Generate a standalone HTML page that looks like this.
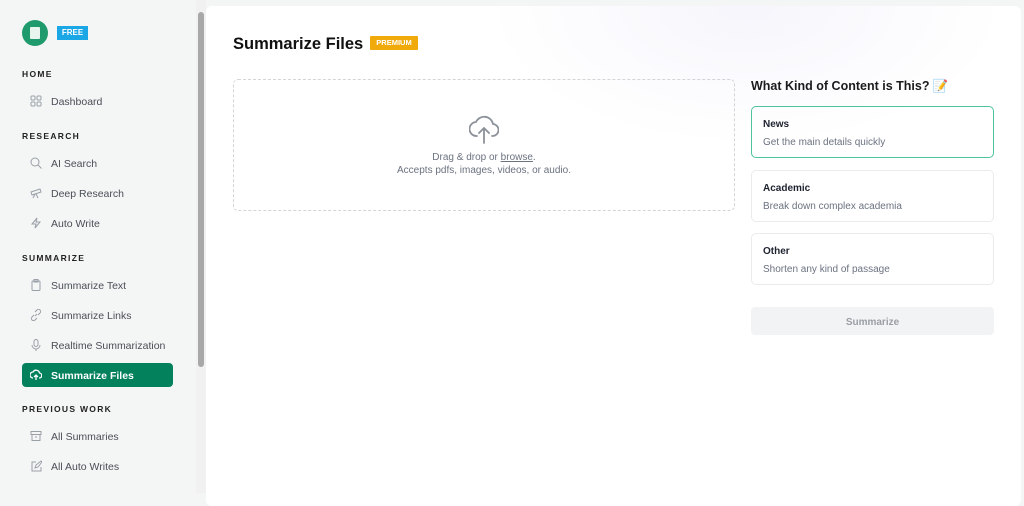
<!DOCTYPE html>
<html><head><style>
*{box-sizing:border-box;margin:0;padding:0}
body{width:1024px;height:493px;overflow:hidden;background:#f4f5f5;font-family:"Liberation Sans",sans-serif;position:relative}
.sb{position:absolute;left:0;top:0;width:196px;height:493px}
.logo{position:absolute;left:22px;top:20px;width:26px;height:26px;border-radius:50%;background:#1f9a6c}
.logo i{position:absolute;left:8px;top:7px;width:10px;height:12px;background:#e8f5ef;border-radius:1px}
.free{position:absolute;left:57px;top:26px;width:31px;height:14px;background:#1ba6e6;color:#fff;font-size:8px;font-weight:bold;text-align:center;line-height:14px}
.h{position:absolute;left:22px;font-size:8.5px;font-weight:bold;letter-spacing:1.3px;color:#222}
.it{position:absolute;left:22px;width:151px;height:24px;font-size:10.5px;color:#4a4f57;line-height:27px;padding-left:29px}
.it svg{position:absolute;left:8px;top:6px}
.act{background:#03805c;color:#fff;font-weight:bold;border-radius:4px}
.scr{position:absolute;left:196px;top:0;width:10px;height:493px;background:#f1f1f1}
.thumb{position:absolute;left:198px;top:12px;width:6px;height:355px;background:#a8a8a8;border-radius:3px}
.main{position:absolute;left:206px;top:6px;width:815px;height:500px;background:#fff;border-radius:6px;overflow:hidden}
.glow{position:absolute;left:280px;top:-140px;width:520px;height:280px;background:radial-gradient(ellipse at center,rgba(236,234,248,.45),rgba(255,255,255,0) 70%)}
.t{position:absolute;left:27px;top:29px;font-size:16.5px;font-weight:bold;color:#111}
.prem{position:absolute;left:164px;top:30px;width:48px;height:14px;background:#f0aa0c;color:#fff;font-size:7.5px;font-weight:bold;text-align:center;line-height:14px;border-radius:1px}
.drop{position:absolute;left:27px;top:73px;width:502px;height:132px;border:1px dashed #d2d4d8;border-radius:5px;text-align:center;color:#6b7280;font-size:10px}
.q{position:absolute;left:545px;top:73px;font-size:12.5px;font-weight:bold;color:#1b1b1b}
.c{position:absolute;left:545px;width:243px;height:52px;border:1px solid #ebebeb;border-radius:5px;padding:12px 11px}
.c b{display:block;font-size:10px;color:#1f2330;margin-bottom:2px}
.c span{font-size:10px;color:#6b7280}
.btn{position:absolute;left:545px;top:301px;width:243px;height:28px;background:#f2f3f4;border-radius:4px;text-align:center;line-height:31px;font-size:10px;font-weight:bold;color:#9a9ea5}
</style></head><body>
<div class="sb">
<div class="logo"><i></i></div><div class="free">FREE</div>
<div class="h" style="top:69px">HOME</div>
<div class="it" style="top:89px"><svg width="12" height="12" fill="none" stroke="#9aa0a8"><rect x="1" y="1" width="4" height="4" rx="1"/><rect x="7" y="1" width="4" height="4" rx="1"/><rect x="1" y="7" width="4" height="4" rx="1"/><rect x="7" y="7" width="4" height="4" rx="1"/></svg>Dashboard</div>
<div class="h" style="top:131px">RESEARCH</div>
<div class="it" style="top:151px"><svg width="12" height="12" fill="none" stroke="#9aa0a8"><circle cx="5" cy="5" r="4"/><path d="M8 8l3.5 3.5"/></svg>AI Search</div>
<div class="it" style="top:181px"><svg width="12" height="12" fill="none" stroke="#9aa0a8"><path d="M1 5l9-3 1 3-9 3zM5 7l-2 4M6 7l2 4"/></svg>Deep Research</div>
<div class="it" style="top:211px"><svg width="12" height="12" fill="none" stroke="#9aa0a8"><path d="M7 1L2 7h4l-1 4 5-6H6z"/></svg>Auto Write</div>
<div class="h" style="top:253px">SUMMARIZE</div>
<div class="it" style="top:273px"><svg width="12" height="12" fill="none" stroke="#9aa0a8"><rect x="2" y="2" width="8" height="9.5" rx="1"/><rect x="4" y="0.5" width="4" height="2.5"/></svg>Summarize Text</div>
<div class="it" style="top:303px"><svg width="12" height="12" fill="none" stroke="#9aa0a8"><path d="M5 7l2-2M4 6L2 8a2 2 0 003 3l2-2M8 6l2-2a2 2 0 00-3-3L5 3"/></svg>Summarize Links</div>
<div class="it" style="top:333px"><svg width="12" height="12" fill="none" stroke="#9aa0a8"><rect x="4" y="0.5" width="4" height="7" rx="2"/><path d="M2 6a4 4 0 008 0M6 10v2"/></svg>Realtime Summarization</div>
<div class="it act" style="top:363px"><svg width="12" height="12" fill="none" stroke="#fff" stroke-width="1.3"><path d="M3 9a3 3 0 01 0-6 3.5 3.5 0 016.5 1A2.5 2.5 0 019 9M6 11V6M4 8l2-2 2 2"/></svg>Summarize Files</div>
<div class="h" style="top:404px">PREVIOUS WORK</div>
<div class="it" style="top:424px"><svg width="12" height="12" fill="none" stroke="#9aa0a8"><rect x="1" y="1.5" width="10" height="3"/><path d="M2 4.5v6h8v-6M5 7h2"/></svg>All Summaries</div>
<div class="it" style="top:454px"><svg width="12" height="12" fill="none" stroke="#9aa0a8"><path d="M6 2H2v9h9V7M5 8l1-3 5-4 1 1-4 5z"/></svg>All Auto Writes</div>
</div>
<div class="scr"></div><div class="thumb"></div>
<div class="main">
<div class="glow"></div>
<div class="t">Summarize Files</div><div class="prem">PREMIUM</div>
<div class="drop">
<svg width="30" height="32" style="margin-top:34px" fill="none" stroke="#8c919a" stroke-width="1.8" stroke-linecap="round" stroke-linejoin="round"><path d="M8 22a7 7 0 01-1-14 9 9 0 0117 2 6 6 0 01-1 12M15 29V14M10 19l5-5 5 5"/></svg>
<div style="margin-top:3px">Drag &amp; drop or <u>browse</u>.</div>
<div style="margin-top:2px">Accepts pdfs, images, videos, or audio.</div>
</div>
<div class="q">What Kind of Content is This? <span style="color:#e0603a">📝</span></div>
<div class="c" style="top:100px;border:1.5px solid #4fc39c"><b>News</b><span>Get the main details quickly</span></div>
<div class="c" style="top:164px"><b>Academic</b><span>Break down complex academia</span></div>
<div class="c" style="top:227px"><b>Other</b><span>Shorten any kind of passage</span></div>
<div class="btn">Summarize</div>
</div>
</body></html>
